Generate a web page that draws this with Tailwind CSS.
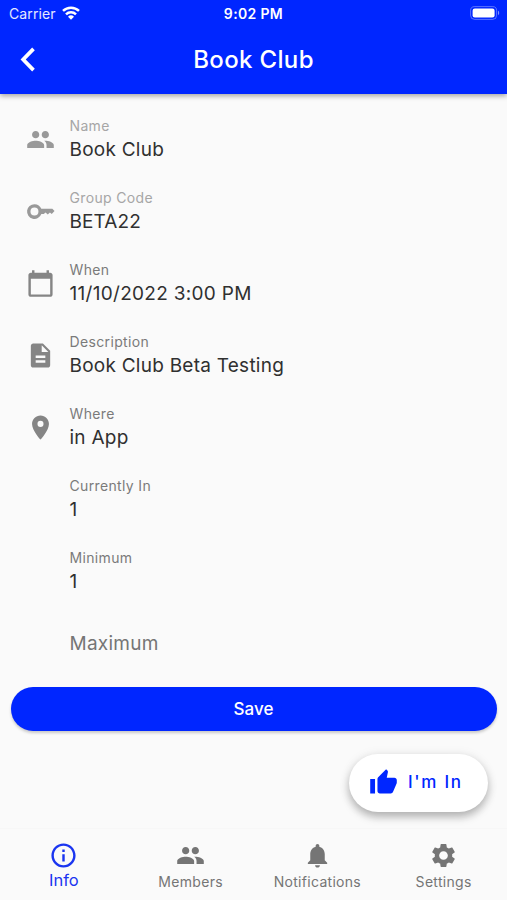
<!DOCTYPE html>
<html lang="en">
<head>
    <meta charset="UTF-8">
    <meta name="viewport" content="width=device-width, initial-scale=1.0">
    <title>Book Club</title>
    <script src="https://cdn.jsdelivr.net/npm/@tailwindcss/browser@4"></script>
</head>
<body class="bg-[#fafafa] font-['Inter',sans-serif]">
    <div class="relative w-[507px] h-[900px] flex flex-col overflow-hidden">
        <!-- Status bar + app bar -->
        <header class="h-[94px] shrink-0 bg-[#0026ff] text-white shadow-[0_2px_5px_rgba(0,0,0,0.35)]">
            <div class="h-[27px] grid grid-cols-3 items-center pl-[9px] pr-[7px]">
                <div class="flex items-center gap-[6px] text-white/90">
                    <span class="text-[14px] tracking-[0.1px]">Carrier</span>
                    <svg class="w-[18px] h-[14px] -mt-[2px]" viewBox="0 0 18 14" fill="none" stroke="white" stroke-width="2.5">
                        <path d="M1 4.9a11.5 11.5 0 0 1 16 0"/>
                        <path d="M4 8.300a7.2 7.2 0 0 1 10 0"/>
                        <path d="M9 13.8 6 10.7a4.3 4.3 0 0 1 6 0z" fill="white" stroke="none"/>
                    </svg>
                </div>
                <span class="text-center text-[14px] font-semibold tracking-[0.35px] -ml-[2px]">9:02 PM</span>
                <svg class="w-[30px] h-[14px] justify-self-end -mt-px" viewBox="0 0 30 14">
                    <rect x="0.6" y="0.6" width="26" height="12.8" rx="4" fill="none" stroke="white" stroke-opacity="0.35"/>
                    <rect x="2.6" y="2.5" width="22" height="9" rx="2.2" fill="white"/>
                    <path d="M28 4.8v4.4c1.6-.6 1.6-3.8 0-4.4z" fill="white" fill-opacity="0.5"/>
                </svg>
            </div>
            <div class="h-[67px] grid grid-cols-[60px_1fr_60px] items-center">
                <svg class="w-[29px] h-[29px] ml-[15px] -mt-[2px]" viewBox="0 0 24 24" fill="white"><path d="M14.2 2.1 16.400 4.300 8.900 12l7.500 7.700-2.200 2.200L4.600 12z"/></svg>
                <h1 class="text-center text-[24px] font-medium tracking-[0.35px] -mt-px">Book Club</h1>
            </div>
        </header>

        <!-- Group details -->
        <main class="pt-[10px] text-[#303030]">
            <div class="h-[72px] flex items-center pl-[25.500px] gap-[15px]">
                <svg class="w-[29px] h-[29px] -mt-px text-[#999]" viewBox="0 0 24 24" fill="currentColor"><path d="M16 11c1.66 0 2.99-1.34 2.99-3S17.66 5 16 5s-3 1.34-3 3 1.34 3 3 3zm-8 0c1.66 0 2.99-1.34 2.99-3S9.66 5 8 5 5 6.34 5 8s1.34 3 3 3zm0 2c-2.33 0-7 1.17-7 3.5V19h14v-2.500C15 14.170 10.330 13 8 13zm8 0c-.29 0-.62.020-.97.050 1.160.84 1.970 1.970 1.970 3.450V19h6v-2.500c0-2.330-4.670-3.500-7-3.500z"/></svg>
                <div class="-mt-[3px]">
                    <div class="text-[14px] leading-[23px] tracking-[0.35px] text-[#a6a6a6]">Name</div>
                    <div class="text-[19px] leading-[26px] tracking-[0.25px]">Book Club</div>
                </div>
            </div>
            <div class="h-[72px] flex items-center pl-[25.500px] gap-[15px]">
                <svg class="w-[29px] h-[29px] -mt-px text-[#999]" viewBox="0 0 24 24" fill="currentColor"><path fill-rule="evenodd" d="M7 5.900a6.100 6.100 0 1 0 5.700 8.200h2l1.500-1.200 1.800 1.500 1.800-1.500 1.500 1.200 2.300-2.500-1.800-1.800H12.700A6.100 6.100 0 0 0 7 5.900zM7 8.700a3.300 3.300 0 1 1 0 6.600 3.300 3.300 0 0 1 0-6.600z"/></svg>
                <div class="-mt-[3px]">
                    <div class="text-[14px] leading-[23px] tracking-[0.35px] text-[#a6a6a6]">Group Code</div>
                    <div class="text-[19px] leading-[26px] tracking-[0.1px]">BETA22</div>
                </div>
            </div>
            <div class="h-[72px] flex items-center pl-[25.500px] gap-[15px]">
                <svg class="w-[29px] h-[29px] -mt-px text-[#858585]" viewBox="0 0 24 24" fill="currentColor"><path d="M20 3h-1V1h-2v2H7V1H5v2H4c-1.100 0-2 .9-2 2v16c0 1.100.9 2 2 2h16c1.100 0 2-.9 2-2V5c0-1.100-.9-2-2-2zm0 18H4V8h16v13z"/></svg>
                <div class="-mt-[3px]">
                    <div class="text-[14px] leading-[23px] tracking-[0.35px] text-[#7a7a7a]">When</div>
                    <div class="text-[19px] leading-[26px] tracking-[0.3px]">11/10/2022 3:00 PM</div>
                </div>
            </div>
            <div class="h-[72px] flex items-center pl-[25.500px] gap-[15px]">
                <svg class="w-[29px] h-[29px] -mt-px text-[#858585]" viewBox="0 0 24 24" fill="currentColor"><path d="M14 2H6c-1.100 0-1.990.9-1.990 2L4 20c0 1.100.89 2 1.990 2H18c1.100 0 2-.9 2-2V8l-6-6zm2 16H8v-2h8v2zm0-4H8v-2h8v2zm-3-5V3.500L18.500 9H13z"/></svg>
                <div class="-mt-[3px]">
                    <div class="text-[14px] leading-[23px] tracking-[0.35px] text-[#7a7a7a]">Description</div>
                    <div class="text-[19px] leading-[26px] tracking-[0.25px]">Book Club Beta Testing</div>
                </div>
            </div>
            <div class="h-[72px] flex items-center pl-[25.500px] gap-[15px]">
                <svg class="w-[29px] h-[29px] -mt-px text-[#858585]" viewBox="0 0 24 24" fill="currentColor"><path d="M12 2C8.130 2 5 5.130 5 9c0 5.250 7 13 7 13s7-7.750 7-13c0-3.870-3.130-7-7-7zm0 9.500a2.500 2.500 0 0 1 0-5 2.500 2.500 0 0 1 0 5z"/></svg>
                <div class="-mt-[3px]">
                    <div class="text-[14px] leading-[23px] tracking-[0.35px] text-[#7a7a7a]">Where</div>
                    <div class="text-[19px] leading-[26px] tracking-[0.25px]">in App</div>
                </div>
            </div>
            <div class="h-[72px] flex items-center pl-[69.500px]">
                <div class="-mt-[3px]">
                    <div class="text-[14px] leading-[23px] tracking-[0.35px] text-[#7a7a7a]">Currently In</div>
                    <div class="text-[19px] leading-[26px]">1</div>
                </div>
            </div>
            <div class="h-[72px] flex items-center pl-[69.500px]">
                <div class="-mt-[3px]">
                    <div class="text-[14px] leading-[23px] tracking-[0.35px] text-[#7a7a7a]">Minimum</div>
                    <div class="text-[19px] leading-[26px]">1</div>
                </div>
            </div>
            <div class="h-[72px] flex items-center pl-[69.500px]">
                <div class="text-[19px] leading-[26px] tracking-[0.25px] text-[#757575]">Maximum</div>
            </div>
        </main>

        <button class="mt-[7px] mx-[10.500px] h-[44px] pt-[2px] shrink-0 rounded-full bg-[#0026ff] text-white text-[17px] font-medium shadow-[0_2px_3px_rgba(0,0,0,0.2)]">Save</button>

        <!-- Floating action button -->
        <button class="absolute left-[349px] top-[754px] w-[139px] h-[58px] rounded-full bg-white text-[#0026ff] flex items-center pl-[20px] gap-[10px] shadow-[0_5px_8px_rgba(0,0,0,0.26),0_1px_12px_rgba(0,0,0,0.08)]">
            <svg class="w-[29px] h-[29px] -mt-[2px]" viewBox="0 0 24 24" fill="currentColor"><path d="M1 21h4V9H1v12zm22-11c0-1.100-.9-2-2-2h-6.310l.95-4.570.030-.32c0-.41-.17-.79-.44-1.060L14.170 1 7.590 7.590C7.220 7.950 7 8.450 7 9v10c0 1.100.9 2 2 2h9c.83 0 1.540-.5 1.840-1.220l3.020-7.050c.09-.23.14-.47.14-.73v-2z"/></svg>
            <span class="text-[17px] font-medium tracking-[1.700px]">I'm In</span>
        </button>

        <!-- Bottom navigation -->
        <nav class="mt-auto h-[72px] shrink-0 grid grid-cols-4 border-t border-[#f7f7f7] bg-[#fafafa] text-[14px] text-[#757575]">
            <div class="flex flex-col items-center pt-[12px] pl-px text-[#1a35f0]">
                <svg class="w-[29px] h-[29px]" viewBox="0 0 24 24" fill="currentColor"><path d="M11 7h2v2h-2zm0 4h2v6h-2zm1-9C6.480 2 2 6.480 2 12s4.480 10 10 10 10-4.480 10-10S17.520 2 12 2zm0 18c-4.410 0-8-3.590-8-8s3.590-8 8-8 8 3.590 8 8-3.590 8-8 8z"/></svg>
                <span class="text-[16.500px] leading-[20px]">Info</span>
            </div>
            <div class="flex flex-col items-center pt-[12px] pl-px">
                <svg class="w-[29px] h-[29px]" viewBox="0 0 24 24" fill="currentColor"><path d="M16 11c1.660 0 2.990-1.340 2.990-3S17.660 5 16 5s-3 1.340-3 3 1.340 3 3 3zm-8 0c1.660 0 2.990-1.340 2.990-3S9.660 5 8 5 5 6.340 5 8s1.340 3 3 3zm0 2c-2.330 0-7 1.170-7 3.500V19h14v-2.500C15 14.170 10.330 13 8 13zm8 0c-.29 0-.62.020-.97.050 1.160.84 1.970 1.970 1.970 3.450V19h6v-2.500c0-2.330-4.670-3.500-7-3.500z"/></svg>
                <span class="leading-[23px] tracking-[0.3px]">Members</span>
            </div>
            <div class="flex flex-col items-center pt-[12px] pl-px">
                <svg class="w-[29px] h-[29px]" viewBox="0 0 24 24" fill="currentColor"><path d="M12 22c1.100 0 2-.9 2-2h-4c0 1.100.89 2 2 2zm6-6v-5c0-3.070-1.640-5.640-4.500-6.320V4c0-.83-.67-1.500-1.500-1.500s-1.500.67-1.500 1.500v.68C7.630 5.360 6 7.920 6 11v5l-2 2v1h16v-1l-2-2z"/></svg>
                <span class="leading-[23px] tracking-[0.300px]">Notifications</span>
            </div>
            <div class="flex flex-col items-center pt-[12px]">
                <svg class="w-[29px] h-[29px]" viewBox="0 0 24 24" fill="currentColor"><path d="M19.140 12.940c.04-.3.060-.61.060-.94 0-.32-.02-.64-.07-.94l2.030-1.580c.18-.14.23-.41.12-.61l-1.920-3.320c-.12-.22-.37-.29-.59-.22l-2.390.96c-.5-.38-1.030-.7-1.620-.94l-.36-2.540c-.04-.24-.24-.41-.48-.41h-3.840c-.24 0-.43.17-.47.41l-.36 2.540c-.59.24-1.130.57-1.620.94l-2.390-.96c-.22-.08-.47 0-.59.22L2.740 8.870c-.12.21-.08.47.12.61l2.030 1.580c-.05.3-.09.63-.09.94s.02.64.07.94l-2.030 1.580c-.18.14-.23.41-.12.61l1.920 3.320c.12.22.37.29.59.22l2.390-.96c.5.38 1.030.7 1.620.94l.36 2.540c.05.24.24.41.48.41h3.840c.24 0 .44-.17.47-.41l.36-2.540c.59-.24 1.130-.56 1.620-.94l2.390.96c.22.08.47 0 .59-.22l1.920-3.320c.12-.22.07-.47-.12-.61l-2.010-1.580zM12 15.600c-1.980 0-3.600-1.620-3.600-3.600s1.620-3.600 3.600-3.600 3.600 1.620 3.600 3.600-1.620 3.600-3.600 3.600z"/></svg>
                <span class="leading-[23px] tracking-[0.300px]">Settings</span>
            </div>
        </nav>
    </div>
</body>
</html>
